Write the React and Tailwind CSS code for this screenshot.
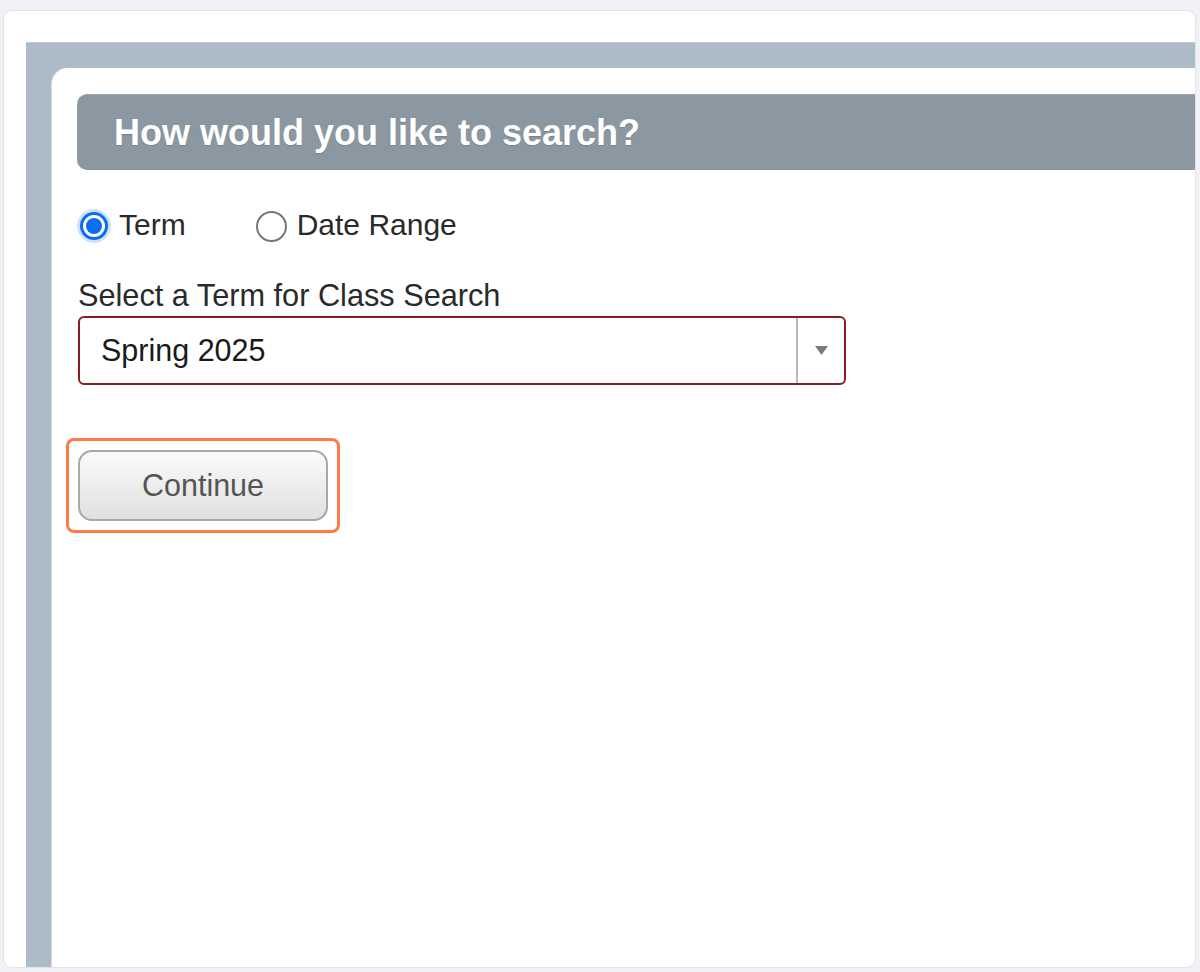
import React from 'react';

const Radio = ({ checked, label }) => (
    <label className="flex items-center gap-[8px] cursor-pointer">
        {checked ? (
            <span className="w-[34px] h-[34px] rounded-full bg-[#cfe2ff] flex items-center justify-center">
                <span className="w-[28px] h-[28px] rounded-full border-[3px] border-[#0b6cf6] bg-white flex items-center justify-center">
                    <span className="w-[16px] h-[16px] rounded-full bg-[#0b6cf6]" />
                </span>
            </span>
        ) : (
            <span className="w-[34px] h-[34px] flex items-center justify-center">
                <span className="w-[31px] h-[31px] rounded-full border-[2px] border-[#777777] bg-white" />
            </span>
        )}
        <span className="text-[30px] text-[#2a2a2a] leading-none -mt-[3px]">{label}</span>
    </label>
);

const App = () => {
    return (
        <div
            className="h-[972px] bg-[#f2f1f5] pt-[10px] pl-[3px] pr-[4px] pb-[4px] flex"
            style={{ fontFamily: '"Liberation Sans", Arial, sans-serif' }}
        >
            <div className="flex-1 flex flex-col bg-white rounded-[9px] border border-[#e4e3e9] overflow-hidden pl-[22px] pt-[31px]">
                {/* blue-gray frame */}
                <div className="flex-1 flex flex-col bg-[#adbbc8] border-t border-[#c3ccd6] pl-[25px] pt-[25px]">
                    <div className="flex-1 bg-white rounded-tl-[16px] border-l border-[#d3dbe3] pl-[25px] pt-[26px]">
                        <div className="h-[76px] bg-[#8c98a1] rounded-l-[10px] border-t border-[#9aa5ad] flex items-center pl-[37px]">
                            <h2 className="text-[36px] font-bold text-white leading-none [text-shadow:0_1px_1px_rgba(0,0,0,0.15)]">
                                How would you like to search?
                            </h2>
                        </div>

                        <div className="flex items-center gap-[69px] mt-[39px]">
                            <Radio checked label="Term" />
                            <Radio label="Date Range" />
                        </div>

                        <div className="mt-[36px] text-[30.7px] text-[#2a2a2a] leading-[34px] pl-[1px]">
                            Select a Term for Class Search
                        </div>

                        <div className="mt-[3px] ml-[1px] w-[768px] h-[69px] border-[2px] border-[#8a1c22] rounded-[6px] flex items-center">
                            <span className="flex-1 pl-[21px] text-[30.5px] text-[#1a1a1a]">Spring 2025</span>
                            <div className="w-[48px] h-full border-l-[2px] border-[#b8b8b8] flex items-center justify-center">
                                <svg width="13" height="9" viewBox="0 0 13 9">
                                    <path d="M0 0 H13 L6.5 9 Z" fill="#7a7a7a" />
                                </svg>
                            </div>
                        </div>

                        <div className="mt-[53px] -ml-[11px] w-[274px] border-[3px] border-[#ff7a45] rounded-[8px] p-[9px]">
                            <button className="w-[250px] h-[71px] rounded-[14px] border-[2px] border-[#a8a8a8] bg-gradient-to-b from-[#fbfbfb] to-[#e0e0e0] text-[30.5px] text-[#555555] flex items-center justify-center">
                                Continue
                            </button>
                        </div>
                    </div>
                </div>
            </div>
        </div>
    );
};

export default App;
